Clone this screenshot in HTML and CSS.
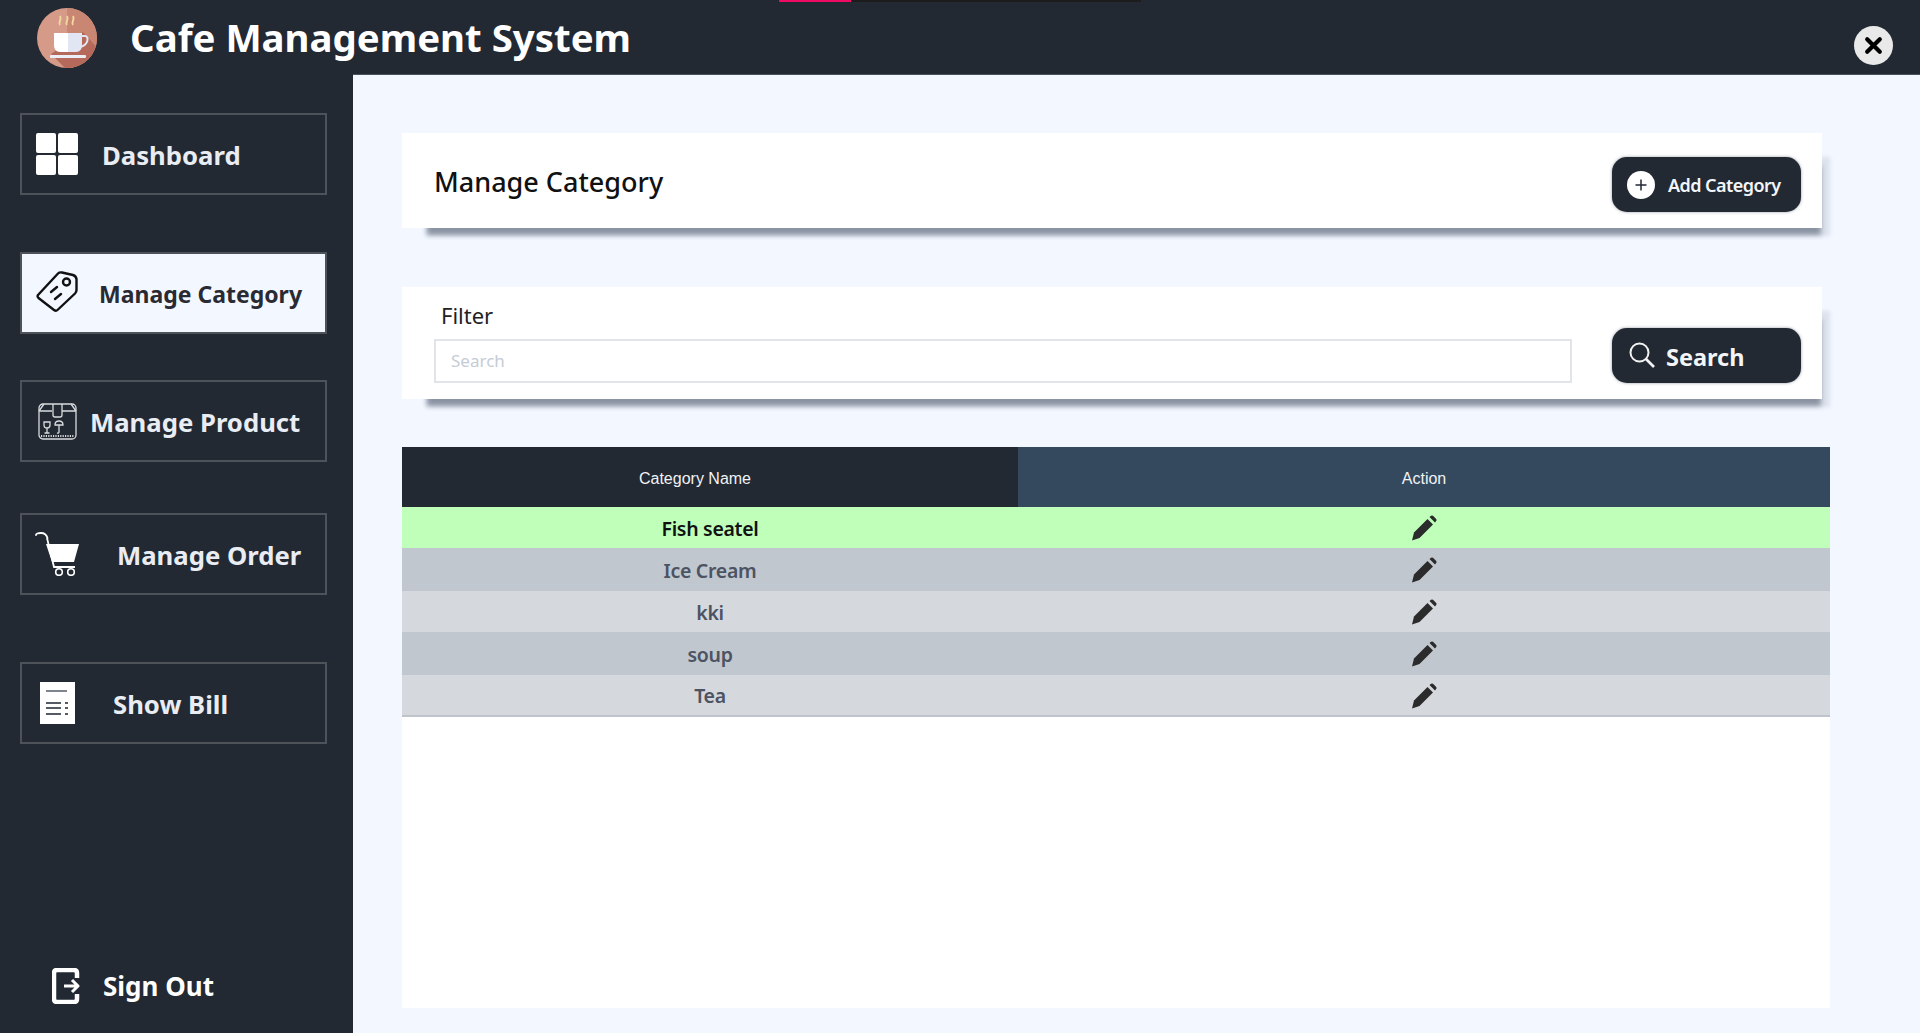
FILE: index.html
```html
<!DOCTYPE html>
<html lang="en">
<head>
<meta charset="utf-8">
<title>Cafe Management System</title>
<link rel="stylesheet" href="styles.css">
</head>
<body>
<div class="progress"><span class="progress-fill"></span></div>
<header class="topbar">
  <svg class="logo" viewBox="0 0 60 60">
    <defs><clipPath id="lc"><circle cx="30" cy="30" r="30"/></clipPath></defs>
    <circle cx="30" cy="30" r="30" fill="#d59a88"/>
    <g clip-path="url(#lc)">
      <path d="M30 0H60V60H30Z" fill="#c98672"/>
      <path d="M14 46L46 24L62 42V62H30Z" fill="#b5695a"/>
    </g>
    <path d="M23 17c-2.500-3 2.500-5 0-9M30 17c-2.500-3 2.500-5 0-9M36 17c-2.500-3 2.500-5 0-9" fill="none" stroke="#efd79e" stroke-width="2"/>
    <path d="M17 25H31V44H23C19 44 17 41 17 37Z" fill="#fff"/>
    <path d="M31 25H45V37C45 41 43 44 39 44H31Z" fill="#e2e6f2"/>
    <path d="M45 28h3c4 0 4 9-5 11" fill="none" stroke="#e2e6f2" stroke-width="2"/>
    <rect x="13" y="47" width="36" height="3" rx="1" fill="#eceef6"/>
  </svg>
  <h1 class="app-title">Cafe Management System</h1>
  <button class="close" aria-label="Close">
    <svg viewBox="0 0 20 20"><path d="M4 4L16 16M16 4L4 16" stroke="#000" stroke-width="4" stroke-linecap="round"/></svg>
  </button>
</header>
<div class="body-row">
  <nav class="sidebar">
    <a class="nav nav-dash">
      <svg class="ic ic-dash" viewBox="0 0 42 42"><rect width="20" height="20" rx="2" fill="#fff"/><rect x="22" width="20" height="20" rx="2" fill="#fff"/><rect y="22" width="20" height="20" rx="2" fill="#fff"/><rect x="22" y="22" width="20" height="20" rx="2" fill="#fff"/></svg>
      <span class="nav-text">Dashboard</span>
    </a>
    <a class="nav nav-cat active">
      <svg class="ic ic-cat" viewBox="0 0 42 42" fill="none" stroke="#111" stroke-width="2.400" stroke-linejoin="round" stroke-linecap="round"><path d="M2 25 L22 3.500 Q23.500 2 26 2.500 L37 5 Q40 6 40.500 9 L40.500 20 Q40.500 22 39 23.500 L21.500 40 Q20 41.500 18 40 L2.500 28 Q1 26.500 2 25Z"/><circle cx="30.500" cy="12" r="3.500"/><path d="M15 22L21 17M19 29L25 24"/></svg>
      <span class="nav-text">Manage Category</span>
    </a>
    <a class="nav nav-prod">
      <svg class="ic ic-prod" viewBox="0 0 39 37" fill="none" stroke="#d9dadd" stroke-width="1.300"><rect x="1" y="1" width="37" height="35" rx="4"/><path d="M1 8H14M24 8H38M6 1L1 8M33 1L38 8M15 1V12Q15 14 17 14H22Q24 14 24 12V1"/><path d="M6 19H12V22Q12 25 9 25Q6 25 6 22ZM9 25V30M6.500 30H11.500M17 22Q17 18 21 18Q25 18 25 22ZM21 22V29Q21 30.500 19 30"/><path d="M3 33H36" stroke-dasharray="1.200 1.200" stroke-width="2"/></svg>
      <span class="nav-text">Manage Product</span>
    </a>
    <a class="nav nav-order">
      <svg class="ic ic-order" viewBox="0 0 44 44"><path d="M1 3Q1 1 6 1Q11 1 12.500 6" fill="none" stroke="#fff" stroke-width="1.800" stroke-linecap="round"/><path d="M11 12H44L39 30H17Z" fill="#fff"/><path d="M12 6L19 35H40" fill="none" stroke="#fff" stroke-width="1.800"/><circle cx="24" cy="40" r="3.300" fill="none" stroke="#fff" stroke-width="1.600"/><circle cx="36" cy="40" r="3.300" fill="none" stroke="#fff" stroke-width="1.600"/></svg>
      <span class="nav-text">Manage Order</span>
    </a>
    <a class="nav nav-bill">
      <svg class="ic ic-bill" viewBox="0 0 35 42"><rect width="35" height="42" fill="#fff"/><path d="M6 9H27" stroke="#555b66" stroke-width="1.500"/><path d="M6 21H21M25 21H28M6 26H21M25 26H28M6 32H21M25 32H28" stroke="#555b66" stroke-width="2"/></svg>
      <span class="nav-text">Show Bill</span>
    </a>
    <a class="signout">
      <svg class="ic ic-out" viewBox="0 0 28 36" fill="none" stroke="#fff" stroke-width="4.500" stroke-linejoin="round"><path d="M25 10V5Q25 2 22 2H5Q2 2 2 5V31Q2 34 5 34H22Q25 34 25 31V26"/><path d="M12 18H25M20 12L26 18L20 24" stroke-width="3"/></svg>
      <span>Sign Out</span>
    </a>
  </nav>
  <main class="main">
    <section class="card card-head">
      <h2 class="page-title">Manage Category</h2>
      <button class="btn btn-add">
        <svg class="plus" viewBox="0 0 28 28"><circle cx="14" cy="14" r="14" fill="#fff"/><path d="M14 8.500V19.500M8.500 14H19.500" stroke="#222933" stroke-width="1.500"/></svg>
        <span>Add Category</span>
      </button>
    </section>
    <section class="card card-filter">
      <div class="filter-field">
        <label class="filter-label" for="q">Filter</label>
        <input class="filter-input" id="q" placeholder="Search">
      </div>
      <button class="btn btn-search">
        <svg class="mag" viewBox="0 0 26 26" fill="none" stroke="#f2f2f2" stroke-width="2"><circle cx="10.500" cy="10.500" r="9"/><path d="M17 17L25 25" stroke-width="2.600"/></svg>
        <span>Search</span>
      </button>
    </section>
    <section class="table-wrap">
      <table class="grid">
        <thead><tr><th class="th-name"><span class="th-shift">Category Name</span></th><th class="th-action">Action</th></tr></thead>
        <tbody>
          <tr class="selected r-41"><td>Fish seatel</td><td><svg class="pencil"><use href="#pencil"/></svg></td></tr>
          <tr class="odd r-43"><td>Ice Cream</td><td><svg class="pencil"><use href="#pencil"/></svg></td></tr>
          <tr class="even r-41"><td>kki</td><td><svg class="pencil"><use href="#pencil"/></svg></td></tr>
          <tr class="odd r-43"><td>soup</td><td><svg class="pencil"><use href="#pencil"/></svg></td></tr>
          <tr class="even r-42"><td>Tea</td><td><svg class="pencil"><use href="#pencil"/></svg></td></tr>
        </tbody>
      </table>
    </section>
  </main>
</div>
<svg class="defs" aria-hidden="true"><symbol id="pencil" viewBox="0 0 26 26"><path d="M1 25.500L3 17.500L16.500 4L22 9.500L8.500 23Z" fill="#2b2b2b"/><path d="M18.500 2L20 .8Q21 0 22 .8L25.200 4Q26 5 25.200 6L24 7.500Z" fill="#2b2b2b"/></symbol></svg>
</body>
</html>
```
FILE: styles.css
```css
* { box-sizing: border-box; }
html, body { margin: 0; height: 100%; }
body {
  display: flex;
  flex-direction: column;
  height: 1033px;
  overflow: hidden;
  font-family: "Noto Sans", "Open Sans", sans-serif;
  background: #f3f7ff;
}
.defs { width: 0; height: 0; position: absolute; }
.progress {
  position: absolute;
  top: 0;
  left: 779px;
  width: 362px;
  height: 2px;
  background: #1c1c1c;
}
.progress-fill { display: block; width: 72px; height: 2px; background: #f00a63; }

.topbar {
  height: 74px;
  flex: none;
  display: flex;
  align-items: center;
  background: #222933;
  padding-left: 37px;
  padding-right: 27px;
}
.logo { width: 60px; height: 60px; flex: none; margin-top: 1px; }
.app-title {
  margin: 0 0 0 33px;
  font-size: 38.400px;
  font-weight: 700;
  color: #fff;
}
.close {
  margin: 16px 0 0 auto;
  width: 39px;
  height: 39px;
  border: 0;
  border-radius: 50%;
  background: #e9e9e9;
  padding: 9px;
  display: flex;
}
.close svg { width: 21px; height: 21px; }

.body-row { flex: 1; display: flex; min-height: 0; }
.sidebar {
  width: 353px;
  flex: none;
  background: #222933;
  display: flex;
  flex-direction: column;
  padding: 39px 26px 22px 20px;
}
.nav {
  height: 82px;
  flex: none;
  display: flex;
  align-items: center;
  border: 2px solid #4e5359;
  color: #e9edf3;
  font-weight: 700;
  font-size: 25.700px;
}
.nav-text { padding-top: 2px; }
.nav-cat { margin-top: 57px; font-size: 23px; background: #f3f7ff; color: #2a2a33; }
.nav-prod { margin-top: 46px; }
.nav-order { margin-top: 51px; }
.nav-bill { margin-top: 67px; }
.ic { flex: none; }
.ic-dash { width: 42px; height: 42px; margin-left: 14px; margin-right: 24px; }
.ic-cat { width: 42px; height: 42px; margin-left: 14px; margin-right: 21px; margin-top: -4px; }
.ic-prod { width: 39px; height: 37px; margin-left: 16px; margin-right: 13px; }
.ic-order { width: 44px; height: 44px; margin-left: 13px; margin-right: 38px; }
.ic-bill { width: 35px; height: 42px; margin-left: 18px; margin-right: 38px; }
.signout {
  margin-top: auto;
  margin-left: 32px;
  margin-bottom: 7px;
  display: flex;
  align-items: center;
  color: #fff;
  font-weight: 700;
  font-size: 26px;
}
.ic-out { width: 28px; height: 36px; margin-right: 23px; }

.main {
  flex: 1;
  display: flex;
  flex-direction: column;
  padding: 58px 90px 25px 49px;
  min-width: 0;
  border-top: 1px solid #4a525e;
}
.card {
  width: 1420px;
  background: #fff;
  flex: none;
  box-shadow: 12px 20px 5px -13px rgba(40, 50, 70, .45), 16px 16px 4px -8px rgba(60, 80, 110, .12);
}
.card-head {
  height: 95px;
  display: flex;
  align-items: center;
  justify-content: space-between;
  padding: 0 21px 0 32px;
}
.page-title { margin: 0; font-size: 27px; font-weight: 500; color: #111; position: relative; top: 1px; }
.btn {
  width: 189px;
  height: 55px;
  border: 0;
  border-radius: 15px;
  background: #222933;
  color: #f3f5f9;
  display: flex;
  align-items: center;
  font-family: inherit;
  font-weight: 600;
  box-shadow: 0 0 3px rgba(40, 50, 70, .5);
}
.btn-add { padding: 0 0 0 15px; font-size: 18px; letter-spacing: -.55px; margin-top: 8px; }
.plus { width: 28px; height: 28px; margin-right: 13px; flex: none; }
.btn-search { padding: 2px 0 0 17px; font-size: 23.500px; font-weight: 700; }
.mag { width: 26px; height: 26px; margin-right: 11px; margin-top: -4px; flex: none; }
.card-filter {
  margin-top: 59px;
  height: 112px;
  display: flex;
  align-items: flex-end;
  justify-content: space-between;
  padding: 0 21px 16px 32px;
}
.filter-field { width: 1138px; display: flex; flex-direction: column; }
.filter-label { font-size: 22px; color: #222; margin-left: 7px; margin-bottom: 9px; line-height: 30px; }
.filter-input {
  height: 44px;
  border: 2px solid #e1e5ea;
  padding: 0 15px 2px;
  font-family: inherit;
  font-size: 17px;
  background: #fff;
  outline: 0;
}
.filter-input::placeholder { color: #c6ccd6; }

.table-wrap { margin-top: 48px; flex: 1; width: 1428px; background: #fff; }
.grid { width: 100%; border-collapse: collapse; table-layout: fixed; }
.grid th {
  height: 60px;
  padding: 4px 0 0;
  font-family: "Liberation Sans", sans-serif;
  font-weight: 400;
  font-size: 16px;
  color: #f1f2f4;
}
.th-name { width: 616px; background: #222933; }
.th-shift { position: relative; left: -15px; }
.th-action { background: #34495e; }
.grid td {
  padding: 1px 0 0;
  text-align: center;
  font-size: 19.500px;
  letter-spacing: -.3px;
  font-weight: 600;
  vertical-align: middle;
}
.r-41 td { height: 41px; }
.r-42 td { height: 41px; border-bottom: 2px solid #bfc4cc; }
.r-43 td { height: 43px; }
.selected { background: #bfffba; color: #111; }
.odd { background: #c1c7cf; color: #4c5362; }
.even { background: #d5d8dd; color: #4c5362; }
.pencil { width: 26px; height: 26px; display: block; margin: 0 auto; }
```
